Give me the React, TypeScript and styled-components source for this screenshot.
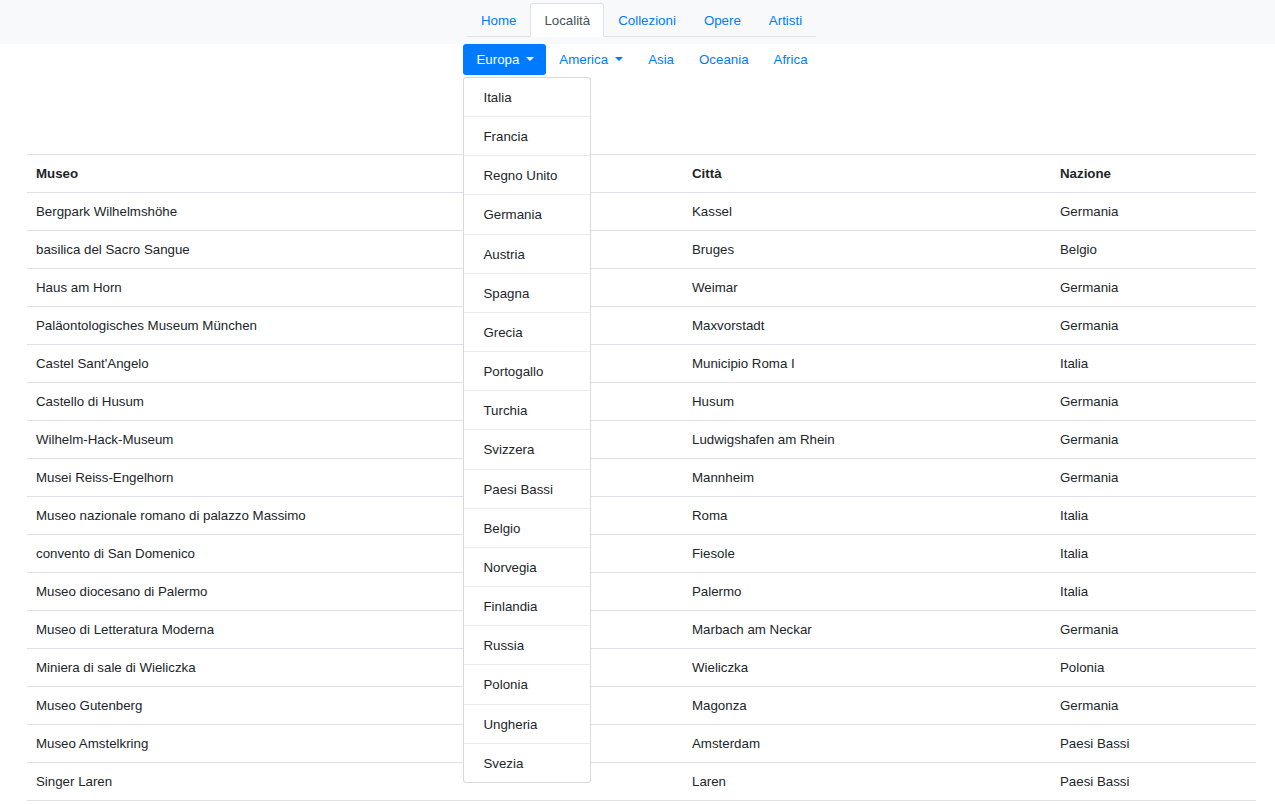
import React from "react";
import styled, { createGlobalStyle } from "styled-components";

const Global = createGlobalStyle`
  html, body { margin: 0; padding: 0; background: #fff; }
  body {
    font-family: "Liberation Sans", Arial, sans-serif;
    font-size: 13.3px;
    line-height: 19px;
    color: #212529;
  }
  * { box-sizing: border-box; }
`;

const TopBar = styled.div`
  background: #f8f9fa;
  padding: 3px 0 7px 8px;
  display: flex;
  justify-content: center;
`;

const Tabs = styled.ul`
  list-style: none;
  margin: 0;
  padding: 0;
  display: flex;
  border-bottom: 1px solid #dee2e6;
`;

const Tab = styled.li<{ $active?: boolean }>`
  margin-bottom: -1px;
  padding: 7px 13px 5px;
  line-height: 20px;
  border: 1px solid ${(p) => (p.$active ? "#dee2e6" : "transparent")};
  border-bottom-color: ${(p) => (p.$active ? "#fff" : "transparent")};
  border-radius: 3px 3px 0 0;
  background: ${(p) => (p.$active ? "#fff" : "transparent")};
  color: ${(p) => (p.$active ? "#495057" : "#007bff")};
  cursor: pointer;
`;

const PillsRow = styled.div`
  display: flex;
  justify-content: center;
  padding: 0 0 0 8px;
`;

const Pills = styled.ul`
  list-style: none;
  margin: 0;
  padding: 0;
  display: flex;
`;

const PillItem = styled.li`
  position: relative;
`;

const Pill = styled.div<{ $active?: boolean }>`
  display: flex;
  align-items: center;
  height: 31px;
  padding: 0 12px 0 13px;
  border-radius: 3px;
  background: ${(p) => (p.$active ? "#007bff" : "transparent")};
  color: ${(p) => (p.$active ? "#fff" : "#007bff")};
  cursor: pointer;
`;

const Caret = styled.span`
  display: inline-block;
  margin-left: 7px;
  width: 0;
  height: 0;
  border-top: 4px solid currentColor;
  border-left: 4px solid transparent;
  border-right: 4px solid transparent;
  margin-top: -2px;
`;

const Menu = styled.div`
  position: absolute;
  top: 33px;
  left: 0;
  width: 128px;
  background: #fff;
  border: 1px solid rgba(0, 0, 0, 0.15);
  border-radius: 3px;
  z-index: 10;
`;

const MenuItem = styled.div`
  padding: 10px 19px 9px 19px;
  line-height: 19.15px;
  color: #212529;
  border-bottom: 1px solid #e9ecef;
  white-space: nowrap;
  &:last-child { border-bottom: none; }
`;

const Main = styled.div`
  padding: 79px 19px 0 27px;
`;

const Table = styled.table`
  width: 100%;
  border-collapse: collapse;
  table-layout: fixed;
`;

const Th = styled.th<{ $w?: string }>`
  text-align: left;
  font-weight: bold;
  padding: 9px;
  line-height: 19px;
  border-top: 1px solid #dee2e6;
  border-bottom: 1px solid #dee2e6;
  width: ${(p) => p.$w || "auto"};
`;

const Td = styled.td`
  padding: 9px;
  line-height: 19px;
  border-bottom: 1px solid #dee2e6;
  white-space: nowrap;
`;

const tabs = ["Home", "Località", "Collezioni", "Opere", "Artisti"];
const regions = [
  { name: "Europa", caret: true, active: true },
  { name: "America", caret: true },
  { name: "Asia" },
  { name: "Oceania" },
  { name: "Africa" },
];
const countries = [
  "Italia", "Francia", "Regno Unito", "Germania", "Austria", "Spagna", "Grecia",
  "Portogallo", "Turchia", "Svizzera", "Paesi Bassi", "Belgio", "Norvegia",
  "Finlandia", "Russia", "Polonia", "Ungheria", "Svezia",
];
const rows: [string, string, string][] = [
  ["Bergpark Wilhelmshöhe", "Kassel", "Germania"],
  ["basilica del Sacro Sangue", "Bruges", "Belgio"],
  ["Haus am Horn", "Weimar", "Germania"],
  ["Paläontologisches Museum München", "Maxvorstadt", "Germania"],
  ["Castel Sant'Angelo", "Municipio Roma I", "Italia"],
  ["Castello di Husum", "Husum", "Germania"],
  ["Wilhelm-Hack-Museum", "Ludwigshafen am Rhein", "Germania"],
  ["Musei Reiss-Engelhorn", "Mannheim", "Germania"],
  ["Museo nazionale romano di palazzo Massimo", "Roma", "Italia"],
  ["convento di San Domenico", "Fiesole", "Italia"],
  ["Museo diocesano di Palermo", "Palermo", "Italia"],
  ["Museo di Letteratura Moderna", "Marbach am Neckar", "Germania"],
  ["Miniera di sale di Wieliczka", "Wieliczka", "Polonia"],
  ["Museo Gutenberg", "Magonza", "Germania"],
  ["Museo Amstelkring", "Amsterdam", "Paesi Bassi"],
  ["Singer Laren", "Laren", "Paesi Bassi"],
];

export default function App() {
  return (
    <>
      <Global />
      <TopBar>
        <Tabs>
          {tabs.map((t) => (
            <Tab key={t} $active={t === "Località"}>{t}</Tab>
          ))}
        </Tabs>
      </TopBar>
      <PillsRow>
        <Pills>
          {regions.map((r) => (
            <PillItem key={r.name}>
              <Pill $active={r.active}>
                {r.name}
                {r.caret && <Caret />}
              </Pill>
              {r.active && (
                <Menu>
                  {countries.map((c) => (
                    <MenuItem key={c}>{c}</MenuItem>
                  ))}
                </Menu>
              )}
            </PillItem>
          ))}
        </Pills>
      </PillsRow>
      <Main>
        <Table>
          <thead>
            <tr>
              <Th $w="656px">Museo</Th>
              <Th $w="368px">Città</Th>
              <Th>Nazione</Th>
            </tr>
          </thead>
          <tbody>
            {rows.map((r) => (
              <tr key={r[0]}>
                <Td>{r[0]}</Td>
                <Td>{r[1]}</Td>
                <Td>{r[2]}</Td>
              </tr>
            ))}
          </tbody>
        </Table>
      </Main>
    </>
  );
}
